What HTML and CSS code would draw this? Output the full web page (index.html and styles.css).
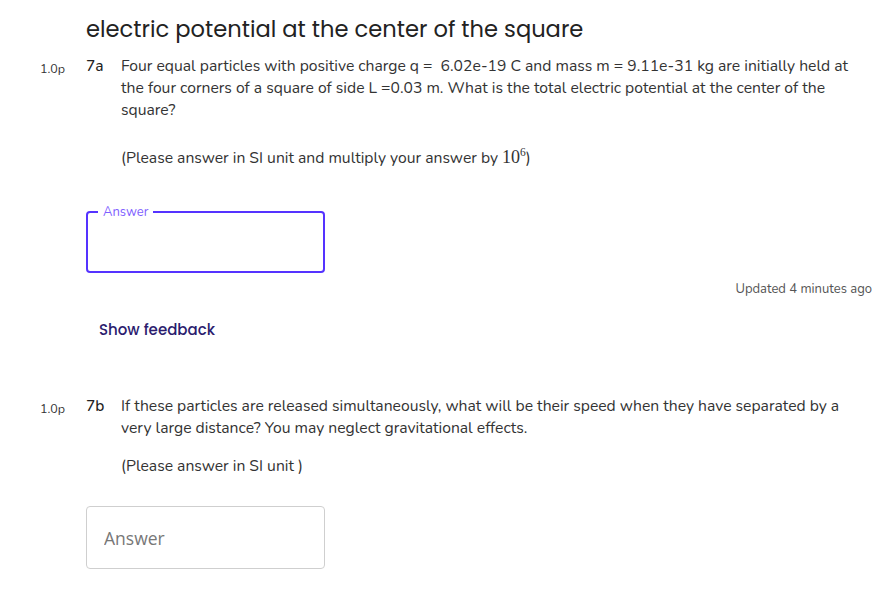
FILE: index.html
```html
<!DOCTYPE html>
<html>
<head>
<meta charset="utf-8">
<link rel="stylesheet" href="styles.css">
</head>
<body>
<div class="page">
  <h1 class="title">electric potential at the center of the square</h1>

  <section class="question">
    <div class="q-row">
      <span class="points">1.0p</span>
      <span class="qnum">7a</span>
      <div class="qtext">
        <p>Four equal particles with positive charge q =&nbsp; 6.02e-19 C and mass m = 9.11e-31 kg are initially held at the four corners of a square of side L =0.03 m. What is the total electric potential at the center of the square?</p>
        <p class="note">(Please answer in SI unit and multiply your answer by <span class="math">10<sup>6</sup></span>)</p>
      </div>
    </div>
    <fieldset class="answer active">
      <legend>Answer</legend>
      <input class="answer-input" type="text">
    </fieldset>
    <div class="updated">Updated 4 minutes ago</div>
    <button class="feedback">Show feedback</button>
  </section>

  <section class="question second">
    <div class="q-row">
      <span class="points">1.0p</span>
      <span class="qnum">7b</span>
      <div class="qtext">
        <p>If these particles are released simultaneously, what will be their speed when they have separated by a very large distance? You may neglect gravitational effects.</p>
        <p class="note2">(Please answer in SI unit )</p>
      </div>
    </div>
    <div class="answer idle">
      <input class="answer-input" type="text" placeholder="Answer">
    </div>
  </section>
</div>
</body>
</html>
```

FILE: styles.css
```css
* { box-sizing: border-box; }
html, body { margin: 0; padding: 0; background: #fff; }
body {
  font-family: "Nunito", "Lato", "Open Sans", sans-serif;
  color: #333;
}
.page {
  width: 886px;
  padding: 13px 14px 0 40px;
}
.title {
  font-family: "Poppins", "Inter", sans-serif;
  font-weight: 400;
  font-size: 22.6px;
  line-height: 32px;
  color: #222;
  margin: 0 0 10px 46px;
}
.q-row {
  display: flex;
  align-items: flex-start;
}
.points {
  width: 46px;
  flex: none;
  font-size: 12.5px;
  line-height: 22px;
  padding-top: 3px;
  color: #333;
}
.qnum {
  width: 35px;
  flex: none;
  font-size: 15.5px;
  font-weight: 500;
  line-height: 22px;
  color: #222;
}
.qtext {
  flex: 1;
  font-size: 15.7px;
  line-height: 22px;
}
.qtext p { margin: 0; }
.qtext .note { margin-top: 25px; }
.qtext .note2 { margin-top: 16px; }
.math {
  font-family: "Liberation Serif", "DejaVu Serif", serif;
  font-size: 18px;
}
.math sup { font-size: 11.5px; vertical-align: 7px; line-height: 0; }

.answer {
  margin: 0 0 0 46px;
  width: 239px;
  border-radius: 4px;
  padding: 0;
}
.answer.active {
  margin-top: 37px;
  height: 67px;
  border: 2px solid #5533ff;
  padding: 0 10px;
  margin-left: 46px;
}
.answer.active legend {
  font-size: 13px;
  line-height: 12px;
  color: #7f5fff;
  padding: 0 5px;
  margin-left: 0;
}
.answer-input {
  border: 0;
  outline: 0;
  width: 100%;
  height: 100%;
  background: transparent;
  font-family: inherit;
  font-size: 16px;
  color: #333;
  padding: 0;
}
.answer.idle {
  margin-top: 29px;
  height: 63px;
  border: 1px solid #cfcfcf;
  padding: 0 17px;
}
.answer.idle .answer-input { font-family: "Open Sans", sans-serif; font-size: 17.5px; }
.answer.idle .answer-input::placeholder { color: #777; }
.updated {
  text-align: right;
  font-size: 13px;
  line-height: 18px;
  color: #555;
  margin-top: 7px;
}
.feedback {
  margin: 16px 0 0 46px;
  border: 0;
  background: transparent;
  font-family: "Poppins", "Inter", sans-serif;
  font-weight: 500;
  font-size: 15px;
  color: #2b1c6e;
  padding: 4px 13px;
  cursor: pointer;
}
.second { margin-top: 50px; }
```
